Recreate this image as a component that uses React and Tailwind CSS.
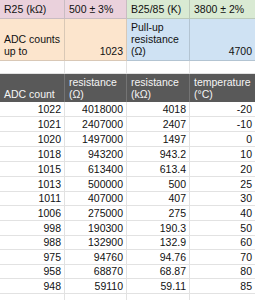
import React from "react";

const data = [
  ["1022", "4018000", "4018", "-20"],
  ["1021", "2407000", "2407", "-10"],
  ["1020", "1497000", "1497", "0"],
  ["1018", "943200", "943.2", "10"],
  ["1015", "613400", "613.4", "20"],
  ["1013", "500000", "500", "25"],
  ["1011", "407000", "407", "30"],
  ["1006", "275000", "275", "40"],
  ["998", "190300", "190.3", "50"],
  ["988", "132900", "132.9", "60"],
  ["975", "94760", "94.76", "70"],
  ["958", "68870", "68.87", "80"],
  ["948", "59110", "59.11", "85"],
];
const heights = ["h-[15px]", "h-[15px]", "h-[15px]", "h-[15px]", "h-[15px]", "h-[15px]", "h-[14px]", "h-[15px]", "h-[15px]", "h-[14px]", "h-[15px]", "h-[14px]", "h-[15px]"];

const cols = "grid grid-cols-[65px_62px_63px_65px]";

export default function App() {
  return (
    <div className="w-[255px] h-[300px] overflow-hidden bg-white text-[10.5px] leading-[12px] text-[#111]" style={{ fontFamily: '"Liberation Sans", Arial, sans-serif' }}>
      {/* row 1 */}
      <div className={`${cols} h-[19px]`}>
        <div className="bg-[#ead1dc] border-r border-b border-[#c9bcc2] flex items-end pl-[4px] pb-[3px]">R25 (kΩ)</div>
        <div className="bg-[#ead1dc] border-r border-b border-[#c9bcc2] flex items-end pl-[4px] pb-[3px]">500 ± 3%</div>
        <div className="bg-[#d9ead3] border-r border-b border-[#bccab8] flex items-end pl-[4px] pb-[3px]">B25/85 (K)</div>
        <div className="bg-[#d9ead3] border-b border-[#bccab8] flex items-end pl-[4px] pb-[3px]">3800 ± 2%</div>
      </div>
      {/* row 2 */}
      <div className={`${cols} h-[42px]`}>
        <div className="bg-[#fce5cd] border-r border-b border-[#d9c8b6] flex items-end pl-[4px] pb-[3px]">ADC counts up to</div>
        <div className="bg-[#fce5cd] border-r border-b border-[#d9c8b6] flex items-end justify-end pr-[3px] pb-[3px]">1023</div>
        <div className="bg-[#cfe2f3] border-r border-b border-[#b3c4d2] flex items-end pl-[4px] pb-[3px]">Pull-up resistance (Ω)</div>
        <div className="bg-[#cfe2f3] border-b border-[#b3c4d2] flex items-end justify-end pr-[3px] pb-[3px]">4700</div>
      </div>
      {/* empty row */}
      <div className={`${cols} h-[13px]`}>
        <div className="border-r border-b border-[#e2e2e2]" />
        <div className="border-r border-b border-[#e2e2e2]" />
        <div className="border-r border-b border-[#e2e2e2]" />
        <div className="border-b border-[#e2e2e2]" />
      </div>
      {/* header */}
      <div className={`${cols} h-[28px] bg-[#595959] text-[#f5f5f5]`}>
        <div className="border-r border-[#747474] flex items-end pl-[4px] pb-[2px]">ADC count</div>
        <div className="border-r border-[#747474] flex items-end pl-[4px] pb-[2px]">resistance<br />(Ω)</div>
        <div className="border-r border-[#747474] flex items-end pl-[4px] pb-[2px]">resistance<br />(kΩ)</div>
        <div className="flex items-end pl-[4px] pb-[2px] whitespace-nowrap">temperature<br />(°C)</div>
      </div>
      {data.map((r, i) => (
        <div key={i} className={`${cols} ${heights[i]}`}>
          {r.map((v, j) => (
            <div key={j} className={`${j < 3 ? "border-r" : ""} border-b border-[#e2e2e2] flex items-end justify-end pr-[3px] pb-[1px]`}>{v}</div>
          ))}
        </div>
      ))}
      <div className={`${cols} h-[15px]`}>
        <div className="border-r border-[#e2e2e2]" />
        <div className="border-r border-[#e2e2e2]" />
        <div className="border-r border-[#e2e2e2]" />
        <div />
      </div>
    </div>
  );
}
